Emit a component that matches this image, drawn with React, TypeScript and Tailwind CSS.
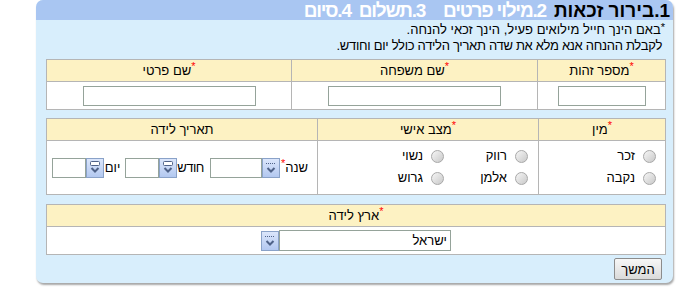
import React from "react";

const Star = ({ className = "" }: { className?: string }) => (
  <span className={"text-[#ff0000] text-[11px] relative top-[-4px] " + className}>*</span>
);

function DropBtn({ variant = "dots" }: { variant?: "dots" | "box" }) {
  return (
    <div className="w-[18px] h-[20px] shrink-0 border border-[#8aa2c8] bg-gradient-to-b from-[#dbe6fb] to-[#b3c8f0] flex items-center justify-center">
      <svg width="14" height="16" viewBox="0 0 14 16">
        {variant === "dots" ? (
          <line x1="2" y1="3.5" x2="12" y2="3.5" stroke="#4f6288" strokeWidth="1" strokeDasharray="1 1" />
        ) : (
          <rect x="2.5" y="1.5" width="9" height="4" rx="1" fill="#ffffff" stroke="#4f6288" strokeWidth="1" />
        )}
        <path d="M3.5 8 L7 11.5 L10.5 8" stroke="#4f6288" strokeWidth="2" fill="none" />
      </svg>
    </div>
  );
}

function TextInput({ w }: { w: number }) {
  return <div style={{ width: w }} className="h-[20px] shrink-0 border border-[#95a39a] bg-white" />;
}

function Radio({ label }: { label: string }) {
  return (
    <div className="flex items-center h-[22px] gap-[8px]">
      <span className="w-[13px] h-[13px] rounded-full border border-[#a8a8a8] bg-gradient-to-br from-[#f6f6f6] to-[#c9c9c9] shrink-0" />
      <span>{label}</span>
    </div>
  );
}

const hdr = "h-[22px] bg-[#fdf2c3] border-b border-[#b5b5b5] flex items-center justify-center";

export default function App() {
  return (
    <div className="w-[677px] h-[294px] bg-white font-['Liberation_Sans',Arial,sans-serif] text-[13px] text-black pt-0">
      <div
        dir="rtl"
        className="ml-[36px] w-[637px] h-[283px] bg-[#d8eefc] rounded-[7px] overflow-hidden shadow-[1px_2px_2px_rgba(0,0,0,0.35)]"
      >
        <div className="h-[20px] bg-[#a9c6f2] flex items-center pr-[3px] text-[19px] font-bold leading-none whitespace-nowrap">
          <span className="text-black">1.בירור זכאות</span>
          <span className="text-white mr-[8px] tracking-[-1.2px]">2.מילוי פרטים</span>
          <span className="text-white mr-[18px] tracking-[-1.2px]">3.תשלום</span>
          <span className="text-white mr-[8px] tracking-[-1.2px]">4.סיום</span>
        </div>
        <div className="pr-[7px] pl-[10px]">
          <div className="pt-[2px] pr-[1px] leading-[15px] whitespace-nowrap">
            <div>
              <span className="text-[11px] relative top-[-3px]">*</span>באם הינך חייל מילואים פעיל, הינך זכאי להנחה.
            </div>
            <div className="pr-[3px] tracking-[-0.3px]">לקבלת ההנחה אנא מלא את שדה תאריך הלידה כולל יום וחודש.</div>
          </div>

          <div className="mt-[6px] w-[620px] border border-[#b5b5b5] bg-white grid grid-cols-[128px_246px_minmax(0,1fr)]">
            <div className={hdr + " border-l"}><Star />מספר זהות</div>
            <div className={hdr + " border-l"}><Star />שם משפחה</div>
            <div className={hdr}><Star />שם פרטי</div>
            <div className="h-[27px] border-l border-[#b5b5b5] flex items-center justify-center"><TextInput w={88} /></div>
            <div className="h-[27px] border-l border-[#b5b5b5] flex items-center justify-center"><TextInput w={173} /></div>
            <div className="h-[27px] flex items-center justify-center"><TextInput w={173} /></div>
          </div>

          <div className="mt-[8px] w-[620px] border border-[#b5b5b5] bg-white grid grid-cols-[127px_221px_minmax(0,1fr)]">
            <div className={hdr + " border-l"}><Star />מין</div>
            <div className={hdr + " border-l"}><Star />מצב אישי</div>
            <div className={hdr}>תאריך לידה</div>
            <div className="h-[53px] border-l border-[#b5b5b5] pr-[9px] pt-[4px] flex flex-col">
              <Radio label="זכר" />
              <Radio label="נקבה" />
            </div>
            <div className="h-[53px] border-l border-[#b5b5b5] pr-[10px] pt-[4px] grid grid-cols-[84px_84px] content-start">
              <Radio label="רווק" />
              <Radio label="נשוי" />
              <Radio label="אלמן" />
              <Radio label="גרוש" />
            </div>
            <div className="h-[53px] pr-[9px] flex items-center whitespace-nowrap overflow-hidden">
              <span className="shrink-0">שנה</span>
              <span className="shrink-0 text-[#ff0000] text-[11px] relative top-[-4px] ml-[1px]">*</span>
              <DropBtn />
              <TextInput w={52} />
              <span className="shrink-0 mr-[6px] tracking-[-0.5px]">חודש</span>
              <DropBtn variant="box" />
              <TextInput w={34} />
              <span className="shrink-0 mr-[5px] ml-[1px]">יום</span>
              <DropBtn variant="box" />
              <TextInput w={34} />
            </div>
          </div>

          <div className="mt-[9px] w-[620px] border border-[#b5b5b5] bg-white flex flex-col">
            <div className={hdr}><Star />ארץ לידה</div>
            <div className="h-[27px] flex items-center justify-center">
              <div className="w-[172px] h-[21px] border border-[#95a39a] bg-white flex items-center pr-[3px]">ישראל</div>
              <DropBtn />
            </div>
          </div>

          <div className="mt-[3px] flex">
            <button className="mr-[4px] w-[48px] h-[22px] border border-[#8c8c8c] rounded-[2px] bg-gradient-to-b from-[#f7f7f7] to-[#dadada] text-[13px] leading-none">
              המשך
            </button>
          </div>
        </div>
      </div>
    </div>
  );
}
